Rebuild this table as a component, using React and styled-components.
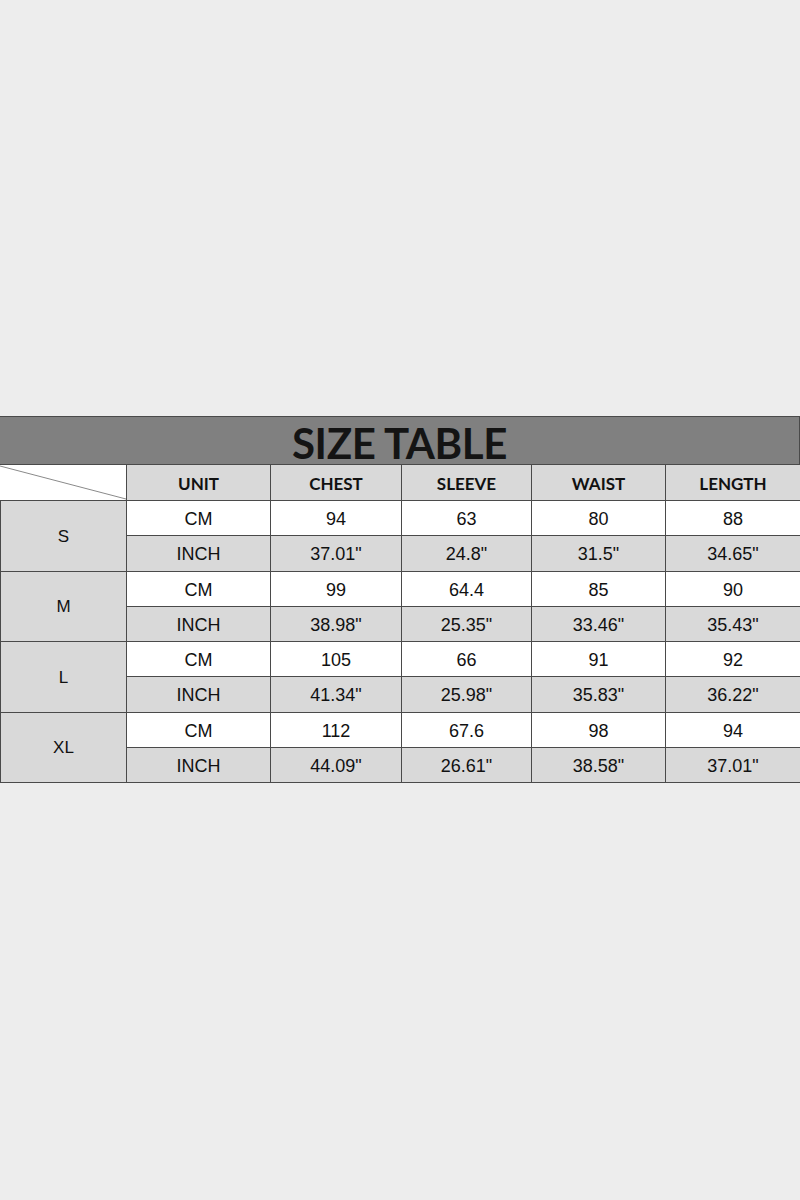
import React from 'react'
import styled, { createGlobalStyle } from 'styled-components'

const GlobalStyle = createGlobalStyle`
  html, body {
    margin: 0;
    padding: 0;
    background: #ededed;
  }
`;

const sizes = [
    { name: 'S', cm: ['94', '63', '80', '88'], inch: ['37.01"', '24.8"', '31.5"', '34.65"'] },
    { name: 'M', cm: ['99', '64.4', '85', '90'], inch: ['38.98"', '25.35"', '33.46"', '35.43"'] },
    { name: 'L', cm: ['105', '66', '91', '92'], inch: ['41.34"', '25.98"', '35.83"', '36.22"'] },
    { name: 'XL', cm: ['112', '67.6', '98', '94'], inch: ['44.09"', '26.61"', '38.58"', '37.01"'] },
];

const headers = ['UNIT', 'CHEST', 'SLEEVE', 'WAIST', 'LENGTH'];

function App() {
    return (
        <Page>
            <GlobalStyle />
            <Table>
                <Title>SIZE TABLE</Title>
                <Grid>
                    <Corner>
                        <svg width="126" height="36" viewBox="0 0 126 36" preserveAspectRatio="none">
                            <line x1="0" y1="1" x2="126" y2="34" stroke="#8a8a8a" strokeWidth="1" />
                        </svg>
                    </Corner>
                    {headers.map((h) => (
                        <HeadCell key={h}>{h}</HeadCell>
                    ))}
                    {sizes.map((s, i) => (
                        <React.Fragment key={s.name}>
                            <SizeCell style={{ gridRow: `${i * 2 + 2} / span 2` }}>{s.name}</SizeCell>
                            <Cell $shade={false}>CM</Cell>
                            {s.cm.map((v, j) => (
                                <Cell key={'c' + j} $shade={false}>{v}</Cell>
                            ))}
                            <Cell $shade>INCH</Cell>
                            {s.inch.map((v, j) => (
                                <Cell key={'i' + j} $shade>{v}</Cell>
                            ))}
                        </React.Fragment>
                    ))}
                </Grid>
            </Table>
        </Page>
    )
}

const Page = styled.div`
    width: 800px;
    height: 1200px;
    padding-top: 416px;
    box-sizing: border-box;
`;

const Table = styled.div`
    width: 800px;
`;

const Title = styled.div`
    height: 48px;
    box-sizing: border-box;
    background: #808080;
    border: 1px solid #4a4a4a;
    border-left: none;
    border-bottom: none;
    padding-top: 2px;
    text-align: center;
    font-family: "Lato", "Liberation Sans", sans-serif;
    font-weight: 700;
    font-size: 42px;
    line-height: 48px;
    letter-spacing: -0.4px;
    color: #141414;
`;

const Grid = styled.div`
    display: grid;
    grid-template-columns: 126px 144px 131px 130px 134px 135px;
    grid-template-rows: 36px repeat(8, 35.25px);
    border-top: 1px solid #4a4a4a;
    border-left: 1px solid #4a4a4a;
    box-sizing: border-box;
`;

const cellBase = `
    box-sizing: border-box;
    border-right: 1px solid #4a4a4a;
    border-bottom: 1px solid #4a4a4a;
    display: flex;
    align-items: center;
    justify-content: center;
    color: #111;
`;

const Corner = styled.div`
    ${cellBase}
    background: #fff;
    margin-left: -1px;
    svg {
        display: block;
    }
`;

const HeadCell = styled.div`
    ${cellBase}
    background: #d9d9d9;
    font-family: "Lato", "Liberation Sans", sans-serif;
    font-weight: 700;
    font-size: 17px;
    padding-top: 2px;
`;

const SizeCell = styled.div`
    ${cellBase}
    grid-column: 1;
    background: #d9d9d9;
    font-family: "Liberation Sans", Arial, sans-serif;
    font-size: 17px;
    padding-top: 2px;
`;

const Cell = styled.div`
    ${cellBase}
    background: ${(p) => (p.$shade ? '#d9d9d9' : '#ffffff')};
    font-family: "Liberation Sans", Arial, sans-serif;
    font-size: 18px;
    padding-top: 3px;
`;

export default App
